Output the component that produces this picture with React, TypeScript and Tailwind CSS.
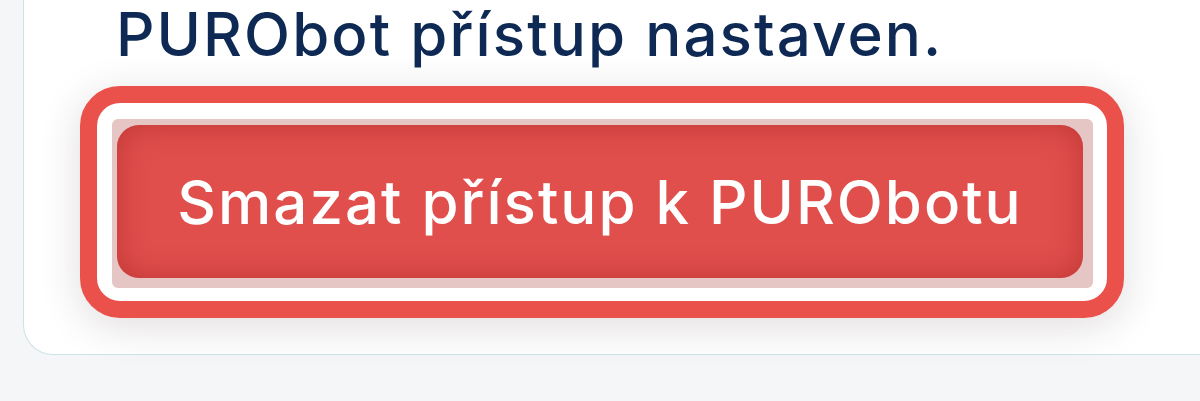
export default function App() {
  return (
    <div className="min-h-[401px] w-[1200px] overflow-hidden bg-[#f4f6f8] pl-[23px]">
      <div className="w-[1300px] rounded-bl-[30px] border-b border-l border-[#cfe2e9] bg-white pb-[36px] pl-[56px]">
        <h2
          className="ml-[36px] whitespace-nowrap pt-[4px] text-[60px] font-medium leading-[60px] tracking-[2.1px] text-[#0e2a54]"
          style={{ fontFamily: 'Inter, "Noto Sans", sans-serif' }}
        >
          PURObot přístup nastaven.
        </h2>
        <div className="mt-[22px] w-[1044px] rounded-[40px] border-[17px] border-[#e9514a] bg-white pb-[13px] pl-[15px] pr-[14px] pt-[16px] shadow-[0_8px_40px_rgba(60,40,40,0.16)]">
          <div className="rounded-[6px] bg-[#e6c5c5] pb-[10px] pl-[5px] pr-[10px] pt-[6px]">
            <button
              type="button"
              className="flex h-[153px] w-full items-center justify-center whitespace-nowrap rounded-[22px] bg-[#e04f4c] text-[60px] font-medium tracking-[2px] text-white shadow-[inset_0_0_30px_rgba(150,25,25,0.45)]"
              style={{ fontFamily: 'Inter, "Noto Sans", sans-serif' }}
            >
              Smazat přístup k PURObotu
            </button>
          </div>
        </div>
      </div>
    </div>
  );
}
